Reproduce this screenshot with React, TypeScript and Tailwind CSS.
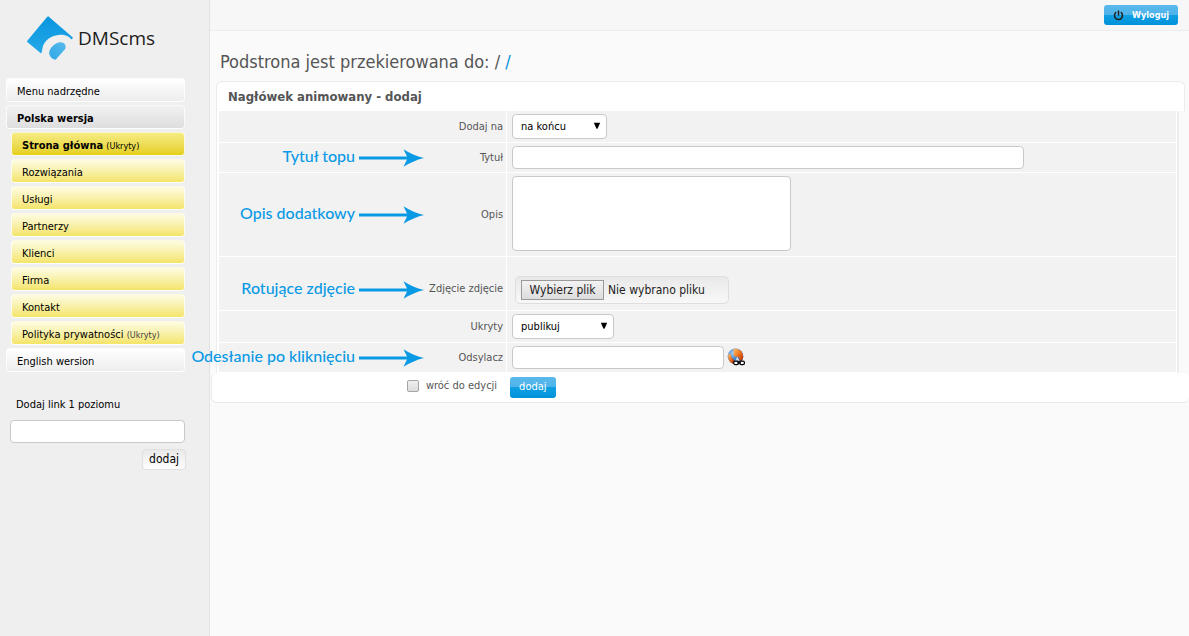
import type { ReactNode } from 'react';

const fieldClass = 'block rounded-[4px] border border-[#c9c9c9] bg-white px-2 text-[11px] text-black';
const blueButton =
  'rounded-[3px] bg-[linear-gradient(to_bottom,#5ab8eb_0%,#4fb3ea_48%,#0f9fe2_50%,#0092da_100%)] text-white';

const pages = [
  { name: 'Rozwiązania' },
  { name: 'Usługi' },
  { name: 'Partnerzy' },
  { name: 'Klienci' },
  { name: 'Firma' },
  { name: 'Kontakt' },
  { name: 'Polityka prywatności', hidden: true },
];

function Logo() {
  return (
    <a href="#" className="flex h-11 items-center gap-[5px] pl-[21px]">
      <svg viewBox="0 0 46 44" className="h-11 w-[46px]" aria-hidden="true">
        <defs>
          <linearGradient id="tile" x1="0" y1="0" x2="0" y2="1">
            <stop offset="0" stopColor="#0795de" />
            <stop offset="1" stopColor="#27a9e8" />
          </linearGradient>
          <linearGradient id="drop" x1="1" y1="0" x2="0" y2="1">
            <stop offset="0" stopColor="#58b9ec" />
            <stop offset="1" stopColor="#2ea8e7" />
          </linearGradient>
        </defs>
        <path
          d="M21.5 .6 45.6 21.2C46 21.6 45.9 22 45.5 22.4L44.2 23.4C42.6 20.6 38 18.6 33 18.8C24 19.2 17 24.6 15.4 32.5C15 35 14.8 37.9 13.8 37.2L.6 26.2C-.1 25.6-.1 25.1.5 24.4L20.3 .8C20.7.3 21.1.3 21.5.6Z"
          fill="url(#tile)"
        />
        <path
          d="M38.4 29.6C37.4 26 33 25.4 29.2 27.4C24.4 30 21.6 34.4 22.4 38.4C22.9 40.8 25.8 42.8 27.4 43.6C28 43.9 28.6 43.7 29 43.2L38 33.2C38.8 32.2 38.8 30.8 38.4 29.6Z"
          fill="url(#drop)"
        />
      </svg>
      <span className="font-['Open_Sans','Noto_Sans',sans-serif] text-[19px] leading-6 text-[#1c1c1c]">DMScms</span>
    </a>
  );
}

function MenuLink({ className, children }: { className: string; children: ReactNode }) {
  return (
    <a href="#" className={`block h-6 rounded-[4px] border border-white/80 pl-[10px] leading-[25px] ${className}`}>
      {children}
    </a>
  );
}

function Sidebar() {
  return (
    <aside className="w-[210px] shrink-0 border-r border-[#e2e2e2] bg-[#efefef] pr-6 pl-[6px] text-black">
      <div className="pt-4 pb-[18px]">
        <Logo />
      </div>
      <nav className="flex flex-col gap-[3px]">
        <MenuLink className="bg-linear-to-b from-white to-[#ededed]">Menu nadrzędne</MenuLink>
        <MenuLink className="bg-linear-to-b from-[#f1f1f1] to-[#dedede] font-bold">Polska wersja</MenuLink>
        <div className="flex flex-col gap-[3px] pl-[5px]">
          <MenuLink className="bg-linear-to-b from-[#f6ec80] to-[#e5cf10]">
            <b>Strona główna</b> <span className="text-[9px]">(Ukryty)</span>
          </MenuLink>
          {pages.map((page) => (
            <MenuLink key={page.name} className="bg-linear-to-b from-[#fefce2] to-[#f4e467]">
              {page.name} {page.hidden && <span className="text-[9px] text-[#444]">(Ukryty)</span>}
            </MenuLink>
          ))}
        </div>
        <MenuLink className="bg-linear-to-b from-white to-[#ededed]">English wersion</MenuLink>
      </nav>
      <form className="flex flex-col pt-[25px] pl-1">
        <label htmlFor="link" className="pl-[6px] leading-4">
          Dodaj link 1 poziomu
        </label>
        <input id="link" className={`${fieldClass} mt-[7px] h-[23px] w-full`} />
        <button
          type="button"
          className="mt-[6px] -mr-[1px] h-[21px] self-end rounded-[4px] border border-[#e0e0e0] bg-linear-to-b from-[#e9e9e9] to-white px-[6px] text-[12px] leading-[19px]"
        >
          dodaj
        </button>
      </form>
    </aside>
  );
}

function Note({ children }: { children: ReactNode }) {
  return (
    <div className="absolute top-1/2 right-[82px] z-10 flex -translate-y-1/2 items-center gap-1 font-['Lato','Noto_Sans',sans-serif] text-[16px] leading-5 font-medium whitespace-nowrap text-[#0a9ae5]">
      <span className="pb-1">{children}</span>
      <svg viewBox="0 0 65 18" className="h-[18px] w-[65px]" fill="currentColor" aria-hidden="true">
        <path d="M0 7.5H48L44.5.2C50.5 4 57.5 7.2 65 9C57.5 10.8 50.5 14 44.5 17.8L48 10.5H0Z" />
      </svg>
    </div>
  );
}

type RowProps = {
  label: string;
  htmlFor: string;
  note?: string;
  labelPad?: string;
  pad?: string;
  children: ReactNode;
};

function Row({ label, htmlFor, note, labelPad = 'pt-[1px]', pad = 'py-[3px]', children }: RowProps) {
  return (
    <div className="flex border-b border-white">
      <div className={`flex w-[30.1%] border-r border-white ${labelPad}`}>
        <div className="relative flex flex-1 items-center justify-end pr-[3px]">
          <label htmlFor={htmlFor}>{label}</label>
          {note && <Note>{note}</Note>}
        </div>
      </div>
      <div className={`flex flex-1 items-center pl-[5px] ${pad}`}>{children}</div>
    </div>
  );
}

function Select({ id, className, options }: { id: string; className: string; options: string[] }) {
  return (
    <div className="relative">
      <select id={id} className={`${fieldClass} h-[25px] appearance-none pt-[2px] ${className}`}>
        {options.map((option) => (
          <option key={option}>{option}</option>
        ))}
      </select>
      <svg viewBox="0 0 8 8" className="pointer-events-none absolute top-2 right-[6px] size-2" aria-hidden="true">
        <path d="M.8 .8H7.2L4.5 6.8H3.5Z" fill="#000" />
      </svg>
    </div>
  );
}

function GlobeLink() {
  return (
    <button type="button" aria-label="Wybierz odsyłacz" className="ml-[3px]">
      <svg viewBox="0 0 19 19" className="size-[19px]" aria-hidden="true">
        <defs>
          <radialGradient id="globe" cx="0.35" cy="0.3" r="0.8">
            <stop offset="0" stopColor="#a9d3f5" />
            <stop offset="0.5" stopColor="#3c7cc4" />
            <stop offset="1" stopColor="#123c7c" />
          </radialGradient>
          <linearGradient id="land" x1="0" y1="0" x2="1" y2="1">
            <stop offset="0" stopColor="#ffc46a" />
            <stop offset="0.5" stopColor="#ee7420" />
            <stop offset="1" stopColor="#a92c08" />
          </linearGradient>
        </defs>
        <circle cx="8.5" cy="8.3" r="7.8" fill="url(#globe)" />
        <path d="M7 .8C12.5-.2 16.4 4 16.2 9C15.8 12.4 14 13.2 12.6 12.8C12 10.6 13 9.4 10.5 9C7.5 8.6 6 7.3 6.8 5.3C7.2 3.6 5.6 2.6 7 .8Z" fill="url(#land)" />
        <path d="M1.6 6C3.6 5.4 4.6 7.4 4.4 9.4C5.2 11 7.4 11.4 7 13C6.6 14.2 7 15 5.6 15.4C2.6 14.2 .2 11 1.6 6Z" fill="url(#land)" />
        <path d="M8 13 10.4 8.8 12.6 12.8Z" fill="#fff" fillOpacity=".75" />
        <g fill="#fff" stroke="#000" strokeWidth="1.2">
          <rect x="6.8" y="13.2" width="4.6" height="3.4" rx="1.4" />
          <rect x="12.8" y="13.2" width="4.6" height="3.4" rx="1.4" />
          <path d="M10.2 14.9H14" />
        </g>
      </svg>
    </button>
  );
}

export default function App() {
  return (
    <div className="flex min-h-screen bg-[#fafafa] font-['DejaVu_Sans_Condensed','DejaVu_Sans',sans-serif] text-[11px] text-[#555]">
      <Sidebar />
      <div className="min-w-0 flex-1">
        <header className="flex h-[31px] items-center justify-end border-b border-[#ececec] bg-[#f7f7f7] pr-[11px]">
          <button type="button" className={`flex h-5 items-center gap-2 px-[9px] pt-[2px] text-[9px] font-bold ${blueButton}`}>
            <svg viewBox="0 0 11 11" className="mb-[2px] size-[11px]" fill="none" stroke="#222" strokeWidth="1.5" aria-hidden="true">
              <path d="M5.5 .4V5.4M3.2 2.2A4 4 0 1 0 7.8 2.2" />
            </svg>
            Wyloguj
          </button>
        </header>
        <main>
          <h1 className="pt-[19px] pl-[10px] text-[18px] leading-6">
            Podstrona jest przekierowana do: /{' '}
            <a href="#" className="text-[#0b8fdc]">
              /
            </a>
          </h1>
          <form>
            <section className="mt-[7px] mr-1 ml-[6px] rounded-t-[6px] border border-b-0 border-[#ebebeb] bg-white">
              <h2 className="pl-[11px] text-[13px] leading-[29px] font-bold">Nagłówek animowany - dodaj</h2>
            </section>
            <div className="mr-[10px] ml-[6px] border-r-2 border-l border-[#ededed]">
              <div className="border-r border-l-2 border-white bg-[#f2f2f2]">
                <Row label="Dodaj na" htmlFor="position">
                  <Select id="position" className="w-[95px]" options={['na końcu', 'na początku']} />
                </Row>
                <Row label="Tytuł" htmlFor="title" note="Tytuł topu">
                  <input id="title" className={`${fieldClass} h-[23px] w-[512px]`} />
                </Row>
                <Row label="Opis" htmlFor="description" note="Opis dodatkowy" pad="pt-[3px] pb-[5px]">
                  <textarea id="description" className={`${fieldClass} h-[75px] w-[279px] resize-none`} />
                </Row>
                <Row
                  label="Zdjęcie zdjęcie"
                  htmlFor="photo"
                  note="Rotujące zdjęcie"
                  labelPad="pt-3"
                  pad="pt-[19px] pb-[6px]"
                >
                  <label
                    htmlFor="photo"
                    className="ml-[3px] flex h-7 w-[214px] items-center gap-1 rounded-[5px] border border-[#dedede] bg-linear-to-b from-[#e9e9e9] to-[#f8f8f8] pl-[5px] text-[12px] text-[#222]"
                  >
                    <input id="photo" type="file" className="sr-only" />
                    <span className="flex h-5 w-[83px] items-center justify-center border border-[#9a9a9a] bg-linear-to-b from-[#f3f3f3] to-[#dcdcdc]">
                      Wybierz plik
                    </span>
                    <span>Nie wybrano pliku</span>
                  </label>
                </Row>
                <Row label="Ukryty" htmlFor="hidden">
                  <Select id="hidden" className="w-[102px]" options={['publikuj', 'ukryj']} />
                </Row>
                <Row label="Odsylacz" htmlFor="target" note="Odesłanie po kliknięciu">
                  <input id="target" className={`${fieldClass} h-[23px] w-[212px]`} />
                  <GlobeLink />
                </Row>
              </div>
            </div>
            <footer className="ml-[1px] flex h-[30px] rounded-[6px] border-b border-l border-[#ebebeb] bg-white">
              <div className="flex w-[30%] items-center justify-end gap-[7px] pr-2 pb-[3px]">
                <input
                  id="return"
                  type="checkbox"
                  className="size-3 appearance-none rounded-[2px] border border-[#a5a5a5] bg-linear-to-b from-[#efefef] to-[#dcdcdc]"
                />
                <label htmlFor="return">wróć do edycji</label>
              </div>
              <button type="button" className={`mt-1 ml-[5px] h-[21px] px-[9px] text-[11px] ${blueButton}`}>
                dodaj
              </button>
            </footer>
          </form>
        </main>
      </div>
    </div>
  );
}
